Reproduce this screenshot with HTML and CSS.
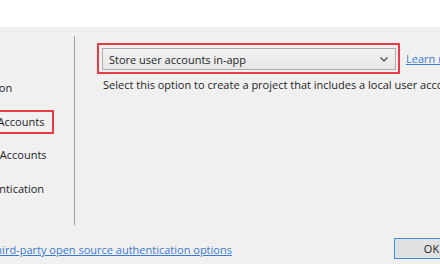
FILE: index.html
```html
<!DOCTYPE html>
<html lang="en">
<head>
  <meta charset="UTF-8">
  <title>Change Authentication</title>
  <link rel="stylesheet" href="styles.css">
</head>
<body>
  <div class="header"></div>

  <div class="main">
    <ul class="auth-list">
      <li>No Authentication</li>
      <li class="selected">Individual User Accounts</li>
      <li>Work or School Accounts</li>
      <li>Windows Authentication</li>
    </ul>
    <div class="divider"></div>
    <div class="options">
      <div class="option-row">
        <div class="highlight">
          <div class="select">
            <span>Store user accounts in-app</span>
            <svg class="chevron" width="8" height="5" viewBox="0 0 8 5">
              <path d="M0.5 0.5 L4 4 L7.5 0.5" fill="none" stroke="#404040" stroke-width="1.1"/>
            </svg>
          </div>
        </div>
        <a class="link learn" href="#">Learn more</a>
      </div>
      <p class="desc">Select this option to create a project that includes a local user account store.</p>
    </div>
  </div>

  <div class="footer">
    <a class="link" href="#">Learn more about third-party open source authentication options</a>
    <button class="ok">OK</button>
  </div>
</body>
</html>
```

FILE: styles.css
```css
body {
  margin: 0;
  width: 440px;
  height: 264px;
  overflow: hidden;
  background-color: #f0f0f0;
  font-family: "Open Sans", "Noto Sans", sans-serif;
  font-size: 11px;
  color: #1e1e1e;
}
.header {
  height: 27px;
  background-color: #ffffff;
}
.main {
  display: flex;
  height: 206px;
  margin-left: -82px;
}
.auth-list {
  flex-shrink: 0;
  list-style: none;
  margin: 0;
  padding: 49px 0 0 0;
  width: 156px;
  display: flex;
  flex-direction: column;
  gap: 9.5px;
}
.auth-list li {
  box-sizing: border-box;
  height: 24px;
  line-height: 22px;
  width: 136px;
  padding-right: 10px;
  border: 1px solid transparent;
  white-space: nowrap;
}
.auth-list li.selected {
  border: 2px solid #ea3a45;
  line-height: 20px;
  margin-left: -2px;
  width: 138px;
}
.divider {
  flex-shrink: 0;
  width: 1px;
  height: 189px;
  margin-top: 9px;
  background-color: #a0a0a0;
}
.options {
  flex-shrink: 0;
  padding: 16px 0 0 22px;
  white-space: nowrap;
}
.option-row {
  display: flex;
  align-items: center;
  gap: 6px;
}
.highlight {
  border: 2px solid #ea3a45;
  padding: 3px 2px 2px 3px;
}
.select {
  width: 294px;
  height: 22px;
  box-sizing: border-box;
  border: 1px solid #adadad;
  background: linear-gradient(#f2f2f2, #e6e6e6);
  display: flex;
  align-items: center;
  justify-content: space-between;
  padding: 0 7px 0 6px;
}
.link {
  color: #3a7bd5;
  text-decoration: underline;
}
.desc {
  margin: 3px 0 0 6px;
}
.footer {
  display: flex;
  align-items: flex-end;
  justify-content: space-between;
  margin-left: -104px;
  width: 573px;
  height: 31px;
  white-space: nowrap;
}
.footer .link {
  margin-bottom: 7px;
}
.ok {
  flex-shrink: 0;
  width: 75px;
  height: 21px;
  margin-bottom: 5px;
  border: 1px solid #3c8de0;
  background-color: #e1e1e1;
  font-family: inherit;
  font-size: 11px;
  color: #1e1e1e;
  padding: 0;
}
```
